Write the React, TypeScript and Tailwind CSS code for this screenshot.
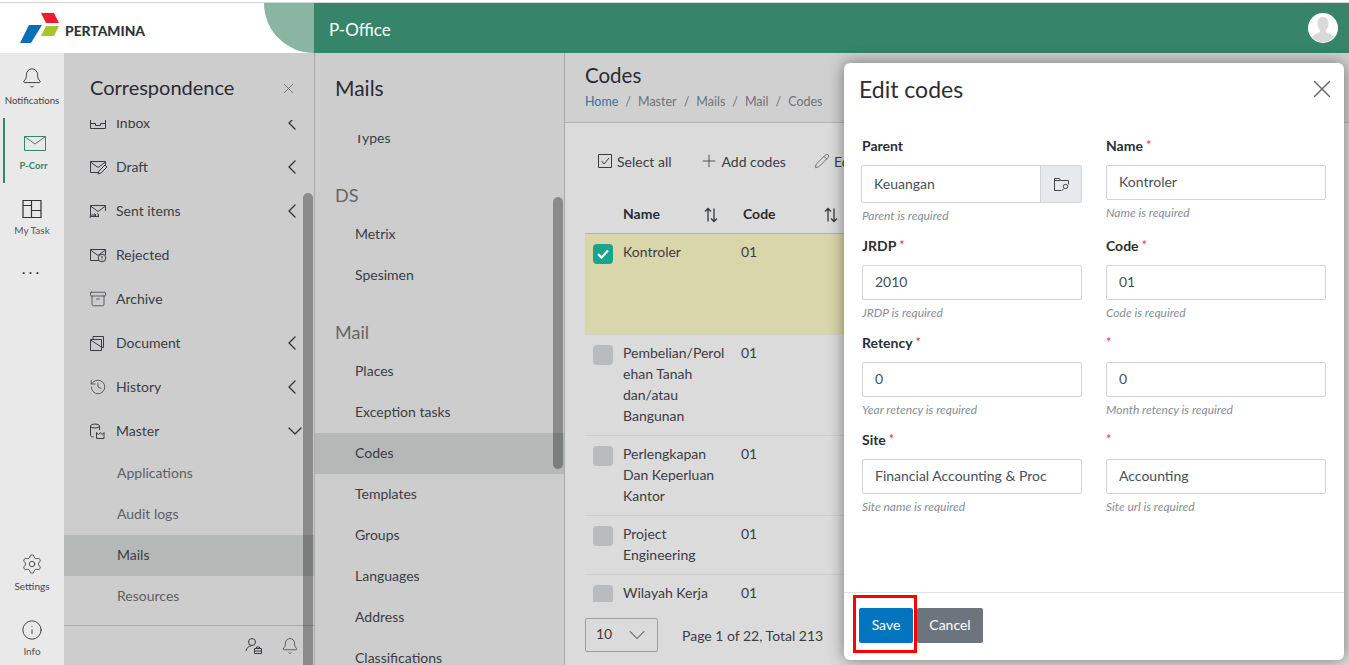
import React from 'react';
import { Archive, Bell, ChevronDown, ChevronLeft, History, Info, Pencil, Plus, Settings, X } from 'lucide-react';

const ink = '#3a3a44';

const MailBase = ({ children }: { children?: React.ReactNode }) => (
  <svg width="18" height="16" viewBox="0 0 18 16" fill="none" stroke={ink} strokeWidth="1">
    <path d="M10 13.5H1.5v-11h15V8" />
    <path d="M1.5 3l7.5 5.5L16.5 3" />
    {children}
  </svg>
);

const InboxIcon = () => (
  <svg width="18" height="16" viewBox="0 0 18 16" fill="none" stroke={ink} strokeWidth="1">
    <path d="M1.5 2.5h15v11h-15z" />
    <path d="M1.5 8.5h5v2h5v-2h5" />
  </svg>
);

const DraftIcon = () => (
  <MailBase>
    <path d="M9 15l1-3 6-6 2 2-6 6z" fill="#cdcdcd" />
  </MailBase>
);

const SentIcon = () => (
  <MailBase>
    <path d="M1 15c0-2 1-3 3-3h3M5 10.5L7 12l-2 1.5M8 10.5L10 12l-2 1.5" />
  </MailBase>
);

const RejectedIcon = () => (
  <MailBase>
    <circle cx="13" cy="11" r="3.8" fill="#cdcdcd" />
    <path d="M13 9v2.4M13 12.4v.8" />
  </MailBase>
);

const DocumentIcon = () => (
  <svg width="16" height="16" viewBox="0 0 16 16" fill="none" stroke={ink} strokeWidth="1">
    <path d="M1.5 4.5h11v11h-11z" />
    <path d="M4 4.5V1.5h10.500v11h-2M1.500 5l11 7" />
  </svg>
);

const MasterIcon = () => (
  <svg width="16" height="16" viewBox="0 0 16 16" fill="none" stroke={ink} strokeWidth="1">
    <ellipse cx="6" cy="3" rx="4.500" ry="2" />
    <path d="M1.500 3v9.500c0 1 1 1.500 3 1.500M10.500 3v4" />
    <path d="M7.500 9.500v6h7.500v-6l-2 2-1.700-2-2 2z" />
  </svg>
);

const MyTaskIcon = () => (
  <svg width="20" height="20" viewBox="0 0 20 20" fill="none" stroke="#333" strokeWidth="1.200">
    <path d="M1 1.500h18v17H1zM9.500 1.500v17M1 6.500h8.500M9.500 11.500H19" />
  </svg>
);

const FolderSearchIcon = () => (
  <svg width="17" height="15" viewBox="0 0 17 15" fill="none" stroke="#444" strokeWidth="1">
    <path d="M8 13.500H1.500v-12h5l1 2h8v4" />
    <path d="M1.500 3.500h6" />
    <circle cx="12.500" cy="9.500" r="2.200" />
    <path d="M11 11.500L8.500 14" />
  </svg>
);

const UserCaseIcon = () => (
  <svg width="18" height="18" viewBox="0 0 18 18" fill="none" stroke={ink} strokeWidth="1">
    <circle cx="7" cy="5" r="3.500" />
    <path d="M1 14c.5-3 2.500-5 5-5" />
    <path d="M9.500 11.500h7v5h-7zM11.500 11.500v-1.500h3v1.500M9.500 14h7" />
  </svg>
);

const SortIcon = () => (
  <svg width="14" height="16" viewBox="0 0 14 16" fill="none" stroke="#33363a" strokeWidth="1.300" className="shrink-0 mt-[3px]">
    <path d="M4 14.500V1.500M1 4.500l3-3 3 3M10 1.500v13M7 11.500l3 3 3-3" />
  </svg>
);

const PertaminaMark = () => (
  <svg width="40" height="32" viewBox="20 12 40 32" className="shrink-0">
    <path d="M41 13h13l5 10H46z" fill="#ed1c2e" />
    <path d="M46 26h13l-5 10H41z" fill="#a6c52c" />
    <path d="M29 25h13L31 43H20z" fill="#0b6fb8" />
  </svg>
);

const AvatarIcon = () => (
  <svg width="30" height="30" viewBox="0 0 30 30" className="rounded-full bg-white">
    <path d="M15 4c3.500 0 5.500 2.500 5.500 6.500 0 3-1.500 5.500-2.500 6.500v2c2 1.500 6 2 8 5-2.500 3-6.500 5-11 5s-8.500-2-11-5c2-3 6-3.500 8-5v-2c-1-1-2.500-3.500-2.500-6.500C9.500 6.500 11.500 4 15 4z" fill="#d9d9d9" />
  </svg>
);

type NavItem = { label: string; icon: React.ReactNode; chevron?: 'left' | 'down' };

const correspondence: NavItem[] = [
  { label: 'Inbox', icon: <InboxIcon />, chevron: 'left' },
  { label: 'Draft', icon: <DraftIcon />, chevron: 'left' },
  { label: 'Sent items', icon: <SentIcon />, chevron: 'left' },
  { label: 'Rejected', icon: <RejectedIcon /> },
  { label: 'Archive', icon: <Archive size={18} strokeWidth={1} color={ink} /> },
  { label: 'Document', icon: <DocumentIcon />, chevron: 'left' },
  { label: 'History', icon: <History size={18} strokeWidth={1} color={ink} />, chevron: 'left' },
  { label: 'Master', icon: <MasterIcon />, chevron: 'down' },
];

const masterItems = ['Applications', 'Audit logs', 'Mails', 'Resources'];

const rows = [
  { name: 'Kontroler', selected: true },
  { name: 'Pembelian/Perol\nehan Tanah\ndan/atau\nBangunan' },
  { name: 'Perlengkapan\nDan Keperluan\nKantor' },
  { name: 'Project\nEngineering' },
  { name: 'Wilayah Kerja' },
];

const MailLink = ({ label, active }: { label: string; active?: boolean }) => (
  <div className={`h-[41px] flex items-center pb-[2px] pl-10 text-[14px] text-[#3c3c44] ${active ? 'bg-[#b4b8b6]' : ''}`}>{label}</div>
);

const Field = ({ label, required, value, help, addon }: { label?: string; required?: boolean; value: string; help: string; addon?: boolean }) => (
  <div>
    <div className="h-[21px] mb-2 text-[14px] leading-[19px] font-bold text-[#2b2f33] flex items-start gap-[3px]">
      {label && <span>{label}</span>}
      {required && <span className="text-[#e5354b] font-normal text-[13px]">*</span>}
    </div>
    {addon ? (
      <div className="flex h-[38px] -ml-px border border-[#ced4da] rounded-[2px] overflow-hidden">
        <input readOnly value={value} className="flex-1 min-w-0 px-3 pb-[2px] text-[14px] text-[#495057] outline-none" />
        <div className="w-[41px] bg-[#e7eaed] border-l border-[#ced4da] flex items-center justify-center">
          <FolderSearchIcon />
        </div>
      </div>
    ) : (
      <input readOnly value={value} className="w-full h-[35px] px-3 pb-[2px] border border-[#ced4da] rounded-[2px] text-[14px] text-[#495057] outline-none" />
    )}
    <div className="pt-[6px] text-[12px] leading-[14px] italic text-[#868e96]">{help}</div>
  </div>
);

export default function App() {
  return (
    <div className="relative w-[1349px] h-[665px] overflow-hidden bg-white font-['Lato','Noto_Sans',sans-serif] text-[#333]">
      <div className="h-[3px] border-b border-[#d6d6d6]" />

      {/* Top bar */}
      <header className="flex h-[50px]">
        <div className="w-[314px] relative flex items-center pl-5 gap-[5px] bg-white">
          <PertaminaMark />
          <span className="text-[13.8px] font-black text-[#2f363b] mt-[6px]">PERTAMINA</span>
          <div className="absolute right-0 top-0 w-[50px] h-[50px] bg-[#8ab5a3] rounded-bl-[50px]" />
        </div>
        <div className="flex-1 bg-[#36846a] flex items-center justify-between pl-[15px] pr-[11px]">
          <span className="text-[17px] text-white pt-[3px]">P-Office</span>
          <AvatarIcon />
        </div>
      </header>

      <div className="flex h-[612px]">
        {/* Icon rail */}
        <aside className="w-16 bg-[#e9e9e9] flex flex-col items-stretch">
          <div className="h-[65px] flex flex-col items-center pt-[14px] gap-[4px]">
            <Bell size={22} strokeWidth={1} color="#333" />
            <span className="text-[9.7px] leading-[14px] text-[#444]">Notifications</span>
          </div>
          <div className="h-[65px] ml-[3px] border-l-2 border-[#36846a] flex flex-col items-center pt-[18px] gap-[8px]">
            <svg width="22" height="15" viewBox="0 0 22 15" fill="none" stroke="#36846a" strokeWidth="1">
              <path d="M.5.5h21v14H.5zM.5.5L11 8 21.500.5" />
            </svg>
            <span className="text-[9.5px] leading-[14px] font-bold text-[#36846a] pr-[2px]">P-Corr</span>
          </div>
          <div className="h-[65px] flex flex-col items-center pt-[16px] gap-[4px]">
            <MyTaskIcon />
            <span className="text-[10px] leading-[14px] text-[#555]">My Task</span>
          </div>
          <div className="text-center text-[16px] leading-none tracking-[3px] text-[#333] mt-[12px]">...</div>
          <div className="mt-auto h-[66px] flex flex-col items-center gap-[4px]">
            <Settings size={22} strokeWidth={1} color="#444" />
            <span className="text-[10px] leading-[14px] text-[#444]">Settings</span>
          </div>
          <div className="h-[46px] flex flex-col items-center gap-[3px]">
            <Info size={22} strokeWidth={1} color="#333" />
            <span className="text-[10px] leading-[14px] text-[#555]">Info</span>
          </div>
        </aside>

        {/* Correspondence menu */}
        <nav className="relative w-[251px] bg-[#cdcdcd] border-r border-[#a9a9a9] flex flex-col">
          <div className="h-[67px] shrink-0 flex items-start justify-between pl-[26px] pr-[17px] pt-[21px]">
            <span className="text-[20px] leading-[27px] text-[#2b2b33]">Correspondence</span>
            <X size={17} strokeWidth={1} color="#555" className="mt-[6px]" />
          </div>
          <div className="flex-1 overflow-hidden">
            <div className="-mt-[19px]">
              {correspondence.map((item) => (
                <div key={item.label} className="h-11 flex items-center pl-[25px] pr-[13px] text-[14px] text-[#3c3c44]">
                  <span className="w-[27px] flex">{item.icon}</span>
                  <span className="flex-1 pb-[2px]">{item.label}</span>
                  {item.chevron === 'left' && <ChevronLeft size={24} strokeWidth={1.300} color="#333" className="-mr-[3px]" />}
                  {item.chevron === 'down' && <ChevronDown size={24} strokeWidth={1.300} color="#333" className="-mr-[6px]" />}
                </div>
              ))}
              {masterItems.map((label) => (
                <div key={label} className={`h-[41px] flex items-center pb-[2px] pl-[53px] text-[14px] ${label === 'Mails' ? 'bg-[#b4b8b6] text-[#3c3c44]' : 'text-[#5c5f66]'}`}>
                  {label}
                </div>
              ))}
            </div>
          </div>
          <div className="h-10 shrink-0 border-t border-[#a9a9a9] flex items-center justify-end gap-[18px] pr-[15px]">
            <UserCaseIcon />
            <Bell size={18} strokeWidth={1} color={ink} />
          </div>
          <div className="absolute right-[1px] top-[140px] bottom-0 w-[10px] rounded-t-md bg-black/[.32]" />
        </nav>

        {/* Mails menu */}
        <nav className="relative w-[250px] bg-[#cdcdcd] border-r border-[#a9a9a9] flex flex-col">
          <div className="h-[82px] shrink-0 pl-5 pt-[21px] text-[21px] leading-[27px] text-[#2b2b33]">Mails</div>
          <div className="flex-1 overflow-hidden">
            <div className="-mt-[17px]">
              <MailLink label="Types" />
              <div className="h-[55px] pl-5 pt-[25px] text-[18px] leading-[22px] text-[#666]">DS</div>
              <MailLink label="Metrix" />
              <MailLink label="Spesimen" />
              <div className="h-[55px] pl-5 pt-[25px] text-[18px] leading-[22px] text-[#666]">Mail</div>
              <MailLink label="Places" />
              <MailLink label="Exception tasks" />
              <MailLink label="Codes" active />
              <MailLink label="Templates" />
              <MailLink label="Groups" />
              <MailLink label="Languages" />
              <MailLink label="Address" />
              <MailLink label="Classifications" />
            </div>
          </div>
          <div className="absolute right-[1px] top-[144px] h-[272px] w-[10px] rounded-md bg-black/[.32]" />
        </nav>

        {/* Codes page */}
        <main className="flex-1 min-w-0 bg-[#dbdbdb]">
          <div className="h-[70px] bg-[#d0d0d0] border-b border-[#b4b4b4] pl-5 pt-[9px]">
            <div className="text-[20.5px] leading-[27px] text-[#2b2b33]">Codes</div>
            <div className="mt-[4px] flex gap-[7px] text-[12.5px] leading-[18px] text-[#6f7378]">
              <span className="text-[#3e6e9e]">Home</span>
              <span>/</span>
              <span>Master</span>
              <span>/</span>
              <span>Mails</span>
              <span>/</span>
              <span>Mail</span>
              <span>/</span>
              <span>Codes</span>
            </div>
          </div>
          <div className="pl-5 w-[765px]">
            <div className="h-[78px] flex items-center pb-[2px] pl-[13px] text-[14px] text-[#3c3c44]">
              <svg width="14" height="14" viewBox="0 0 14 14" fill="none" stroke={ink} strokeWidth="1" className="mr-[5px]">
                <path d="M.5.5h13v13H.5zM3.500 7l2.500 3 5-6" />
              </svg>
              <span className="mr-[27px]">Select all</span>
              <Plus size={20} strokeWidth={1} color={ink} className="mr-[3px]" />
              <span className="mr-[28px]">Add codes</span>
              <Pencil size={16} strokeWidth={1} color={ink} className="mr-[4px]" />
              <span>Edit</span>
            </div>
            <div className="h-[33px] border-b border-[#b2b2b2] flex pt-[3px] text-[14px] leading-5 font-bold text-[#2b2b33]">
              <span className="w-[38px]" />
              <span className="w-[81px]">Name</span>
              <SortIcon />
              <span className="w-[81px] ml-[25px]">Code</span>
              <SortIcon />
            </div>
            <div className="h-[368px] overflow-hidden">
              {rows.map((row) => (
                <div key={row.name} className={`flex pt-[7px] pb-[9px] border-b border-[#cfcfcf] text-[14px] leading-[21px] text-[#3c3c44] ${row.selected ? 'bg-[#dad6ab] min-h-[101px]' : ''}`}>
                  <div className="w-[38px] pl-2 pt-[3px]">
                    {row.selected ? (
                      <div className="w-5 h-5 rounded-[4px] bg-[#17a689] flex items-center justify-center">
                        <svg width="12" height="10" viewBox="0 0 12 10" fill="none" stroke="#fff" strokeWidth="2.200">
                          <path d="M1 5l3.500 3.500L11 1.500" />
                        </svg>
                      </div>
                    ) : (
                      <div className="w-5 h-5 rounded-[4px] bg-[#b9bcbf]" />
                    )}
                  </div>
                  <div className="w-[118px] whitespace-pre-line">{row.name}</div>
                  <div>01</div>
                </div>
              ))}
            </div>
            <div className="mt-4 flex items-center">
              <div className="w-[73px] h-[34px] border border-[#9d9d9d] rounded-[2px] flex items-center justify-between pl-[10px] pr-[6px] text-[14px] text-[#3c3c44]">
                <span className="pb-[3px]">10</span>
                <ChevronDown size={28} strokeWidth={0.900} color="#555" />
              </div>
              <span className="ml-6 text-[14px] text-[#3c3c44]">Page 1 of 22, Total 213</span>
            </div>
          </div>
        </main>
      </div>

      {/* Edit dialog */}
      <div className="absolute left-[844px] top-[63px] w-[500px] h-[597px] bg-white rounded-md shadow-[0_0_16px_rgba(0,0,0,0.45)] flex flex-col">
        <div className="h-[73px] shrink-0 flex items-start justify-between pl-[15px] pr-[7px] pt-[11px]">
          <span className="text-[23px] leading-[30px] text-[#2b2f33]">Edit codes</span>
          <X size={30} strokeWidth={1.100} color="#666" />
        </div>
        <div className="flex-1 grid grid-cols-[220px_220px] grid-rows-[100px_97px_97px_97px] gap-x-6 pl-[18px]">
          <Field label="Parent" value="Keuangan" help="Parent is required" addon />
          <Field label="Name" required value="Kontroler" help="Name is required" />
          <Field label="JRDP" required value="2010" help="JRDP is required" />
          <Field label="Code" required value="01" help="Code is required" />
          <Field label="Retency" required value="0" help="Year retency is required" />
          <Field required value="0" help="Month retency is required" />
          <Field label="Site" required value="Financial Accounting & Proc" help="Site name is required" />
          <Field required value="Accounting" help="Site url is required" />
        </div>
        <div className="h-[68px] shrink-0 border-t border-[#dee2e6] pt-[15px] pl-[15px] flex items-start gap-1">
          <button className="w-[54px] h-[35px] pb-[2px] bg-[#0275be] rounded-[2px] text-white text-[14px]">Save</button>
          <button className="w-[66px] h-[35px] pb-[2px] bg-[#6c757d] rounded-[2px] text-white text-[14px]">Cancel</button>
        </div>
      </div>
      <div className="absolute left-[853px] top-[595px] w-[64px] h-[58px] border-[3px] border-[#f00]" />
    </div>
  );
}
